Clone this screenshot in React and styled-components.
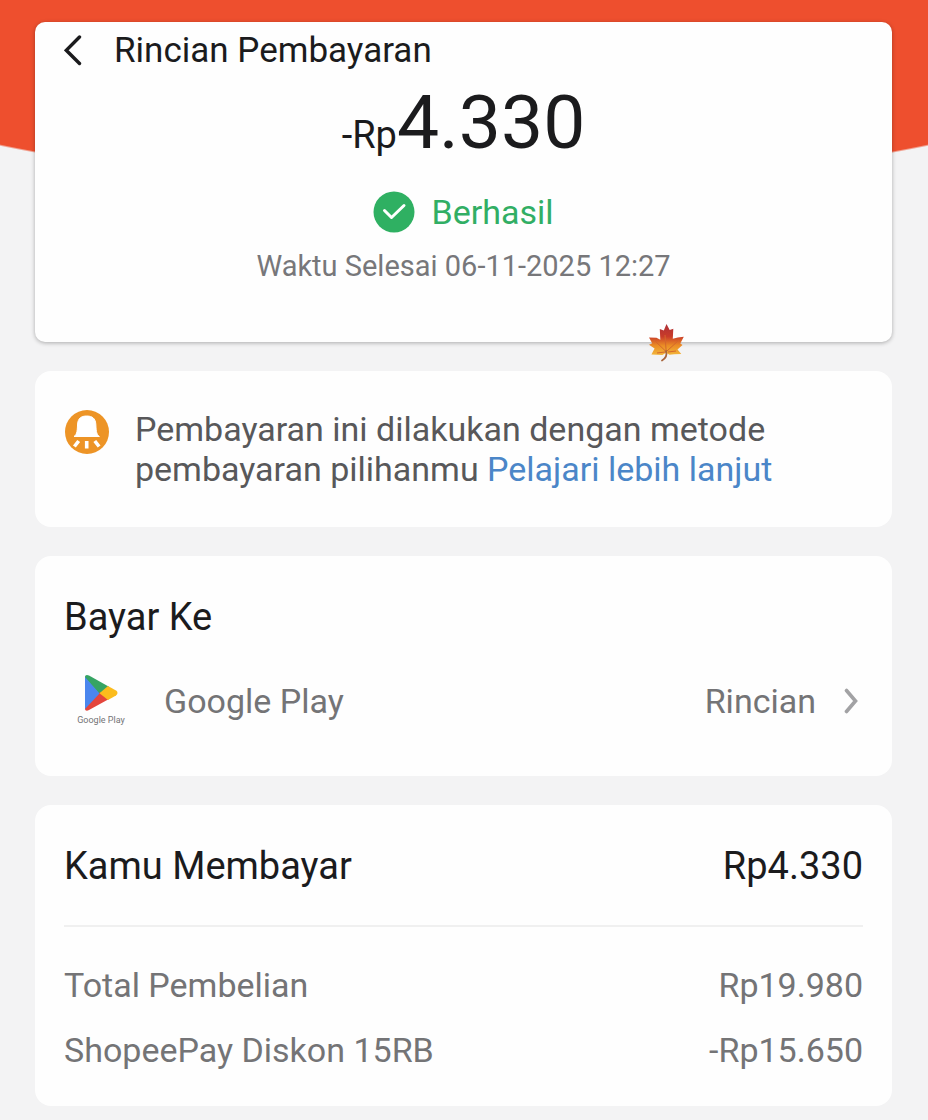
import React from "react";
import styled, { createGlobalStyle } from "styled-components";

const Global = createGlobalStyle`
  *, *::before, *::after { box-sizing: border-box; }
  body {
    margin: 0;
    background: #f3f3f4;
    font-family: Roboto, "Liberation Sans", sans-serif;
    color: #1b1b1d;
  }
  h1, h2, p, dl, dt, dd { margin: 0; font-weight: 400; }
  button { font: inherit; color: inherit; border: 0; padding: 0; background: none; cursor: pointer; }
`;

const Page = styled.main`
  display: flex;
  flex-direction: column;
  gap: 29px;
  min-height: 100vh;
  padding: 22px 36px 13px 35px;
  background: radial-gradient(75% 160px at 50% 27px, #ee4f2e 99%, #f3f3f4 100%) no-repeat;
`;

const Card = styled.section`
  padding: ${(p) => p.$pad};
  border-radius: 16px;
  background: #fefefe;
`;

const SummaryCard = styled.section`
  position: relative;
  padding: 8px 29px 58px;
  border-radius: 10px;
  background: #fefefe;
  box-shadow: 0 1px 4px rgba(0, 0, 0, 0.3);
`;

const TitleBar = styled.header`
  display: flex;
  align-items: center;
  gap: 32px;
  height: 42px;
`;

const BackButton = styled.button`
  display: flex;
`;

const Title = styled.h1`
  font-size: 35px;
  line-height: 42px;
`;

const Amount = styled.p`
  text-align: center;
  font-size: 75px;
  line-height: 100px;
`;

const Currency = styled.span`
  font-size: 38px;
  line-height: 40px;
`;

const Status = styled.p`
  display: flex;
  align-items: center;
  justify-content: center;
  gap: 16px;
  margin-top: 19px;
  font-size: 34px;
  line-height: 42px;
  color: #31ae64;
`;

const Finished = styled.p`
  margin-top: 15px;
  text-align: center;
  font-size: 29px;
  line-height: 36px;
  color: #77777a;
`;

const LeafSlot = styled.span`
  position: absolute;
  right: 207px;
  bottom: -21px;
  display: flex;
`;

const Notice = styled.div`
  display: flex;
  align-items: flex-start;
  gap: 25px;
`;

const NoticeText = styled.p`
  flex: 1;
  max-width: 660px;
  font-size: 34px;
  line-height: 40px;
  color: #58585a;
`;

const Link = styled.a`
  color: #4b86c8;
  text-decoration: none;
`;

const Heading = styled.h2`
  font-size: 38px;
  line-height: 44px;
`;

const Merchant = styled.div`
  display: flex;
  align-items: center;
  margin-top: 30px;
  height: 64px;
  font-size: 34px;
  line-height: 40px;
  color: #747476;
`;

const MerchantLogo = styled.span`
  display: flex;
  flex-direction: column;
  align-items: center;
  width: 74px;
  margin-right: 26px;
  font-size: 9px;
  line-height: 16px;
`;

const DetailButton = styled.button`
  display: flex;
  align-items: center;
  gap: 28px;
  margin-left: auto;
  padding-right: 5px;
`;

const Row = styled.div`
  display: flex;
  justify-content: space-between;
  align-items: baseline;
`;

const Divider = styled.hr`
  margin: 37px 0 38px;
  border: 0;
  border-top: 2px solid #f0f0f0;
`;

const Lines = styled.dl`
  display: flex;
  flex-direction: column;
  gap: 25px;
  font-size: 34px;
  line-height: 40px;
  color: #747476;
`;

const BackIcon = () => (
  <svg width="18" height="32" viewBox="0 0 18 32" fill="none" stroke="#1b1b1d" strokeWidth="3.4" strokeLinecap="round" strokeLinejoin="miter" aria-hidden="true">
    <path d="M15.500 2 2.300 15.300 15.500 28.500" />
  </svg>
);

const CheckIcon = () => (
  <svg width="42" height="42" viewBox="0 0 42 42" aria-hidden="true">
    <circle cx="21" cy="21" r="20.5" fill="#2fb062" />
    <path d="M11.500 19.500 18.500 26.500 31 14.500" fill="none" stroke="#fff" strokeWidth="3" strokeLinecap="round" strokeLinejoin="round" />
  </svg>
);

const BellIcon = () => (
  <svg width="46" height="46" viewBox="0 0 46 46" aria-hidden="true">
    <circle cx="23" cy="23" r="22" fill="#ed9426" />
    <path d="M10 27.500c3.500-2.200 3.200-7 3.600-12.500C14 9.500 17 7 22.700 7s8.700 2.500 9.100 8c.4 5.500.1 10.300 3.600 12.500z" fill="#fff" stroke="#fff" strokeWidth="1" strokeLinejoin="round" />
    <path d="m14.700 32-4.300 5.500M22.700 32v7.500M30.800 32l4.300 5.500" fill="none" stroke="#fff" strokeWidth="3.600" />
  </svg>
);

const PlayIcon = () => (
  <svg width="36" height="38" viewBox="0 0 36 38" aria-hidden="true">
    <path d="M2 3C2 .8 4 .4 6 1.500l20 11.200L17 21 2 4z" fill="#36a463" />
    <path d="M2 34.500c0 2.400 2 2.600 4 1.500l20-11L17 18 2 33z" fill="#e4453c" />
    <path d="M2 3v32l14.500-15.500z" fill="#4a86ee" />
    <path d="m25 12 8 4.500c2 1.200 2 3.600 0 4.900l-8 4.600-8.500-6.800z" fill="#fbbc1d" />
  </svg>
);

const ChevronIcon = () => (
  <svg width="14" height="26" viewBox="0 0 14 26" fill="none" stroke="#a2a2a4" strokeWidth="3.600" strokeLinecap="round" aria-hidden="true">
    <path d="m2.500 2.500 9 10.500-9 10.500" />
  </svg>
);

const LeafIcon = () => (
  <svg width="38" height="40" viewBox="0 0 38 40" aria-hidden="true">
    <defs>
      <linearGradient id="leaf" x1="0" y1="0" x2="0" y2="1">
        <stop offset="0" stopColor="#ad3038" />
        <stop offset=".4" stopColor="#c93b29" />
        <stop offset=".7" stopColor="#eb8d25" />
        <stop offset="1" stopColor="#f2b53a" />
      </linearGradient>
    </defs>
    <path d="m19.500 1 3.200 6 3.600-1.300-.5 10 5-1.200 6-.7-3.500 6.700 2.200 1.500-5 4.500 3.800 4.500-7 .3-4.800.4-3.500-2-3.600 2.200-11-.4 3.200-6L2 21.700l3.200-1.400L2 14.500l7.500.3 3.800 2-.5-10.700 4 1.400z" fill="url(#leaf)" />
    <path d="M19.200 29 18 12M18.500 28 7 17M20 28l12-11M18 29l-8 1M21 29l8-1" fill="none" stroke="#d4672c" strokeWidth="1" />
    <path d="M19 28c1.500 5-.5 7.500-4 9.500" fill="none" stroke="#a7653d" strokeWidth="1.800" strokeLinecap="round" />
  </svg>
);

export default function App() {
  return (
    <>
      <Global />
      <Page>
        <SummaryCard>
          <TitleBar>
            <BackButton type="button" aria-label="Kembali">
              <BackIcon />
            </BackButton>
            <Title>Rincian Pembayaran</Title>
          </TitleBar>
          <Amount>
            <Currency>-Rp</Currency>4.330
          </Amount>
          <Status>
            <CheckIcon />
            Berhasil
          </Status>
          <Finished>Waktu Selesai 06-11-2025 12:27</Finished>
          <LeafSlot>
            <LeafIcon />
          </LeafSlot>
        </SummaryCard>

        <Card $pad="38px 29px">
          <Notice>
            <BellIcon />
            <NoticeText>
              Pembayaran ini dilakukan dengan metode pembayaran pilihanmu{" "}
              <Link href="#pelajari">Pelajari lebih lanjut</Link>
            </NoticeText>
          </Notice>
        </Card>

        <Card $pad="39px 29px 43px">
          <Heading>Bayar Ke</Heading>
          <Merchant>
            <MerchantLogo>
              <PlayIcon />
              Google Play
            </MerchantLogo>
            Google Play
            <DetailButton type="button">
              Rincian
              <ChevronIcon />
            </DetailButton>
          </Merchant>
        </Card>

        <Card $pad="39px 29px 36px">
          <Row>
            <Heading>Kamu Membayar</Heading>
            <Heading as="p">Rp4.330</Heading>
          </Row>
          <Divider />
          <Lines>
            <Row>
              <dt>Total Pembelian</dt>
              <dd>Rp19.980</dd>
            </Row>
            <Row>
              <dt>ShopeePay Diskon 15RB</dt>
              <dd>-Rp15.650</dd>
            </Row>
          </Lines>
        </Card>
      </Page>
    </>
  );
}
